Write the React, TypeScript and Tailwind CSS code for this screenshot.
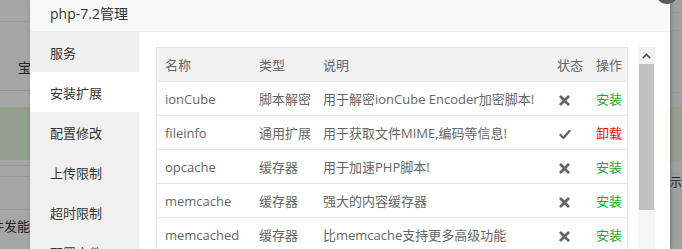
import React from "react";

const rows = [
  { name: "ionCube", type: "脚本解密", desc: "用于解密ionCube Encoder加密脚本!", ok: false },
  { name: "fileinfo", type: "通用扩展", desc: "用于获取文件MIME,编码等信息!", ok: true },
  { name: "opcache", type: "缓存器", desc: "用于加速PHP脚本!", ok: false },
  { name: "memcache", type: "缓存器", desc: "强大的内容缓存器", ok: false },
  { name: "memcached", type: "缓存器", desc: "比memcache支持更多高级功能", ok: false },
];

const menu = ["服务", "安装扩展", "配置修改", "上传限制", "超时限制", "配置文件"];

function Cross() {
  return (
    <svg width="11" height="11" viewBox="0 0 11 11" className="inline-block">
      <path d="M1.8 1.8 L9.2 9.2 M9.2 1.8 L1.8 9.2" stroke="#666" strokeWidth="2.8" strokeLinecap="round" />
    </svg>
  );
}
function Check() {
  return (
    <svg width="12" height="11" viewBox="0 0 12 11" className="inline-block">
      <path d="M1.5 6 L4.5 9 L10.5 2" stroke="#666" strokeWidth="2.4" fill="none" strokeLinecap="round" strokeLinejoin="round" />
    </svg>
  );
}

export default function App() {
  return (
    <div
      className="relative flex w-[682px] h-[249px] overflow-hidden bg-white"
      style={{ fontFamily: '"Open Sans", "Noto Sans CJK SC", sans-serif' }}
    >
      {/* left background */}
      <div className="relative w-[30px] h-full bg-[#a6a6a6] flex flex-col shrink-0">
        <div className="h-[22px] border-b border-[#9a9a9a]" />
        <div className="h-[69px] border-b border-[#969696] flex items-center justify-end text-[13px] text-[#222] pt-[24px]">
          <span className="mr-[-1px]">宝</span>
        </div>
        <div className="h-[16px]" />
        <div className="h-[53px] bg-[#93a08e]" />
        <div className="h-[5px]" />
        <div className="h-[12px] border-t border-b border-[#999]" />
        <div className="h-[33px] border-b border-[#9c9c9c]" />
        <div className="h-[30px] flex items-center text-[13px] text-[#222] whitespace-nowrap overflow-hidden justify-end pt-[4px]">
          <span>件发能</span>
        </div>
      </div>

      {/* modal */}
      <div className="relative w-[640px] h-full flex flex-col bg-white shrink-0 shadow-[1px_0_4px_rgba(0,0,0,0.3)]">
        <div className="h-[32px] bg-[#f8f8f8] border-b border-[#eee] px-[20px] flex items-center text-[14px] text-[#333] shrink-0 pb-[4px]">
          php-7.2管理
        </div>
        <div className="flex flex-1 min-h-0">
          <div className="w-[109px] bg-[#f0f0f0] flex flex-col shrink-0">
            {menu.map((m, i) => (
              <div
                key={m}
                className={`h-[40px] shrink-0 flex items-center pl-[20px] pt-[3px] text-[13px] text-[#333] ${
                  i === 1 ? "bg-white" : i === 0 ? "bg-[#efefef]" : ""
                }`}
              >
                {m}
              </div>
            ))}
          </div>
          <div className="flex-1 pl-[17px] pt-[15px] flex">
            <div className="w-[472px] shrink-0">
              <div className="border border-[#e6e6e6] text-[13px] text-[#666]">
                <div className="flex h-[34px] items-center bg-[#f2f2f2] border-b border-[#e6e6e6] pt-[2px]">
                  <div className="w-[94px] pl-[8px]">名称</div>
                  <div className="w-[64px] pl-[8px]">类型</div>
                  <div className="w-[234px] pl-[8px]">说明</div>
                  <div className="w-[39px] pl-[8px]">状态</div>
                  <div className="pl-[8px]">操作</div>
                </div>
                {rows.map((r) => (
                  <div key={r.name} className="flex h-[34px] items-center border-b border-[#e6e6e6] pt-[3px]">
                    <div className="w-[94px] pl-[8px]">{r.name}</div>
                    <div className="w-[64px] pl-[8px]">{r.type}</div>
                    <div className="w-[234px] pl-[8px] whitespace-nowrap">{r.desc}</div>
                    <div className="w-[39px] pl-[10px] flex items-center">{r.ok ? <Check /> : <Cross />}</div>
                    <div className={`pl-[8px] ${r.ok ? "text-[#ff0000]" : "text-[#20a53a]"}`}>{r.ok ? "卸载" : "安装"}</div>
                  </div>
                ))}
              </div>
            </div>
            <div className="ml-[10px] w-[17px] flex flex-col bg-[#f1f1f1]">
              <div className="h-[17px] flex items-center justify-center">
                <svg width="9" height="6" viewBox="0 0 9 6">
                  <path d="M1 5 L4.5 1.5 L8 5" stroke="#505050" strokeWidth="1.6" fill="none" />
                </svg>
              </div>
              <div className="h-[146px] bg-[#c1c1c1] mx-[1px]" />
              <div className="flex-1 bg-[#f6f6f6]" />
            </div>
          </div>
        </div>
        {/* close button */}
        <div className="absolute right-[-8px] top-[-18px] w-[22px] h-[22px] rounded-full bg-[#5a5a5a]" />
      </div>

      {/* right background */}
      <div className="flex-1 bg-[#a0a0a0] flex flex-col">
        <div className="h-[13px] border-b border-[#8ea08a]" />
        <div className="h-[18px] border-b border-[#999]" />
        <div className="h-[62px] border-b border-[#999]" />
        <div className="h-[14px]" />
        <div className="h-[55px] bg-[#93a08e]" />
        <div className="h-[12px] border-b border-[#999]" />
        <div className="h-[20px] text-[12px] text-[#222] overflow-hidden whitespace-nowrap">示</div>
      </div>
    </div>
  );
}
